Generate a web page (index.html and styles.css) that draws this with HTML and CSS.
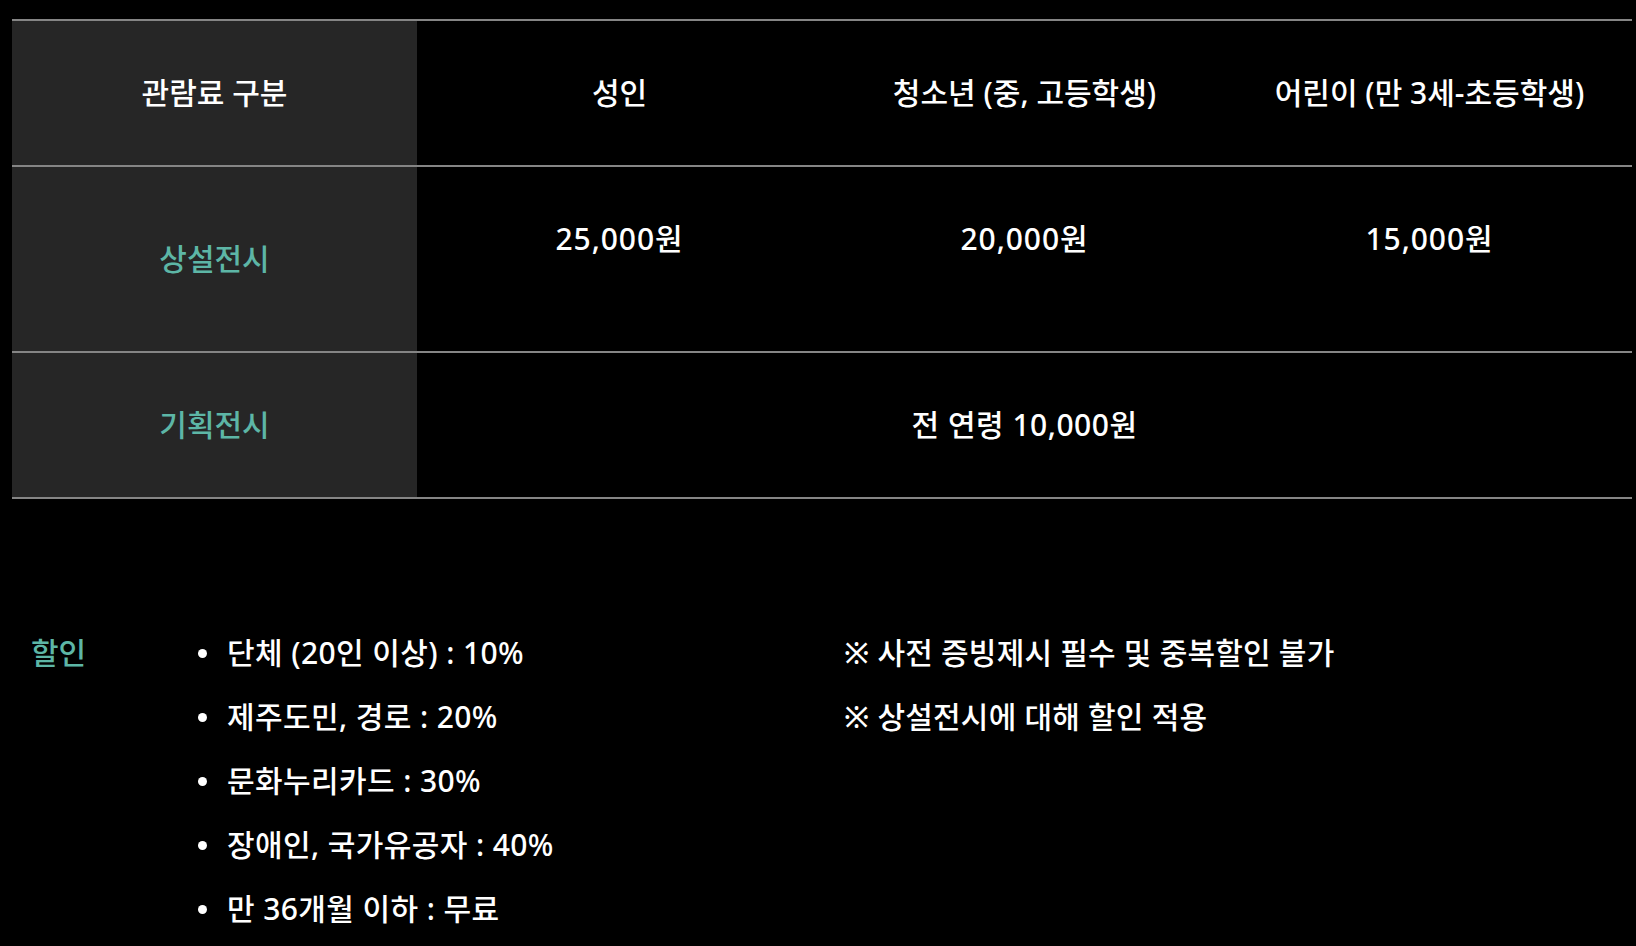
FILE: index.html
```html
<!DOCTYPE html>
<html lang="ko">
<head>
<meta charset="utf-8">
<title>관람료</title>
<link rel="stylesheet" href="styles.css">
</head>
<body>
<main class="page">
  <table class="fee-table">
    <colgroup>
      <col class="col"><col class="col"><col class="col"><col class="col">
    </colgroup>
    <thead>
      <tr>
        <th class="cat">관람료 구분</th>
        <th>성인</th>
        <th>청소년 (중, 고등학생)</th>
        <th>어린이 (만 3세-초등학생)</th>
      </tr>
    </thead>
    <tbody>
      <tr>
        <th class="cat accent">상설전시</th>
        <td class="price">25,000원</td>
        <td class="price">20,000원</td>
        <td class="price">15,000원</td>
      </tr>
      <tr>
        <th class="cat accent">기획전시</th>
        <td colspan="3" class="all-ages">전 연령 10,000원</td>
      </tr>
    </tbody>
  </table>

  <section class="discount">
    <h3 class="label">할인</h3>
    <ul class="items">
      <li>단체 (20인 이상) : 10%</li>
      <li>제주도민, 경로 : 20%</li>
      <li>문화누리카드 : 30%</li>
      <li>장애인, 국가유공자 : 40%</li>
      <li>만 36개월 이하 : 무료</li>
    </ul>
    <ul class="notes">
      <li>※ 사전 증빙제시 필수 및 중복할인 불가</li>
      <li>※ 상설전시에 대해 할인 적용</li>
    </ul>
  </section>
</main>
</body>
</html>
```

FILE: styles.css
```css
html, body {
  margin: 0;
  padding: 0;
  background: #000;
}

body {
  color: #fff;
  font-family: "Noto Sans", "Noto Sans CJK KR", sans-serif;
  font-size: 30px;
  font-weight: 500;
  line-height: 42px;
}

.page {
  padding: 19px 0 0 12px;
}

.fee-table {
  width: 1620px;
  table-layout: fixed;
  border-collapse: separate;
  border-spacing: 0;
}

.fee-table .col {
  width: 405px;
}

.fee-table th,
.fee-table td {
  padding: 51px 0;
  text-align: center;
  vertical-align: middle;
  font-weight: 500;
  border-bottom: 2px solid #858585;
}

.fee-table thead th {
  border-top: 2px solid #858585;
}

.fee-table .cat {
  background: #262626;
}

.fee-table .accent {
  color: #5db6a6;
}

.fee-table .price {
  vertical-align: top;
  padding-bottom: 91px;
  letter-spacing: 0.9px;
}

.fee-table .all-ages {
  letter-spacing: 0.5px;
}

.discount {
  display: flex;
  margin-top: 133px;
  padding-left: 19px;
}

.label {
  margin: 0;
  width: 167px;
  font-size: 30px;
  font-weight: 500;
  color: #5db6a6;
}

.items,
.notes {
  list-style: none;
  margin: 0;
  padding: 0;
  display: flex;
  flex-direction: column;
  gap: 22px;
}

.items {
  width: 646px;
}

.items li {
  display: flex;
  align-items: center;
  letter-spacing: 0.4px;
}

.notes li {
  letter-spacing: 0.2px;
}

.items li::before {
  content: "";
  width: 9px;
  height: 9px;
  border-radius: 50%;
  background: #fff;
  margin-right: 20px;
  flex: none;
}
```
